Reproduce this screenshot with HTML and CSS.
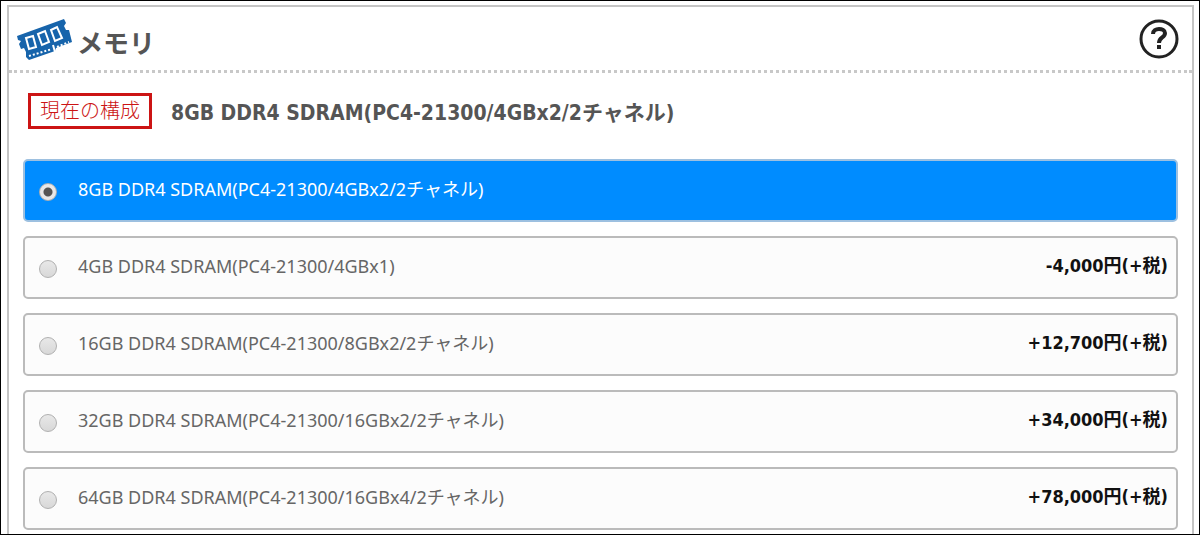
FILE: index.html
```html
<!DOCTYPE html>
<html lang="ja">
<head>
  <meta charset="UTF-8">
  <meta name="viewport" content="width=device-width, initial-scale=1.0">
  <title>メモリ</title>
  <link rel="stylesheet" href="styles.css">
</head>
<body>

  <main class="panel">
    <header class="panel-header">
      <svg class="memory-icon" viewBox="0 0 56 44" aria-hidden="true">
        <path fill="#1764ab" d="M0 19 L47 2 L49 6 L47 9 L49 13 L52 13 L55 25 L39 31 L38 34 L12 43 L9 40 L9 35 L7 31 L4 32 L2 27 L4 24 L1 23 Z"/>
        <g fill="none" stroke="#fff" stroke-width="2">
          <path d="M9 21 L16 19 L19 30 L12 32 Z"/>
          <path d="M21 17 L28 14 L32 25 L25 28 Z"/>
          <path d="M34 13 L40 10 L45 21 L38 24 Z"/>
        </g>
        <path stroke="#fff" stroke-width="2" stroke-dasharray="2 2" d="M12 39 L35 32 M40 30 L52 25"/>
        <path stroke="#fff" stroke-width="2" d="M36 28 L38 35"/>
      </svg>
      <h1>メモリ</h1>
      <button class="help-button" type="button" aria-label="ヘルプ">
        <svg viewBox="0 0 40 40" aria-hidden="true">
          <circle cx="20" cy="20" r="18" fill="none" stroke="#222" stroke-width="3"/>
          <path fill="none" stroke="#222" stroke-width="4" d="M14 15 C14 8 26 9 26 14 C26 19 20 18 20 24"/>
          <rect x="18" y="26" width="4" height="4" fill="#222"/>
        </svg>
      </button>
    </header>

    <!-- 現在の構成 -->
    <div class="current">
      <span class="current-label">現在の構成</span>
      <h2>8GB DDR4 SDRAM(PC4-21300/4GBx2/2チャネル)</h2>
    </div>

    <!-- 選択肢 -->
    <form class="options">
      <label class="option">
        <input type="radio" name="memory" checked>
        <span class="option-name">8GB DDR4 SDRAM(PC4-21300/4GBx2/2チャネル)</span>
      </label>
      <label class="option">
        <input type="radio" name="memory">
        <span class="option-name">4GB DDR4 SDRAM(PC4-21300/4GBx1)</span>
        <span class="option-price">-4,000円(+税)</span>
      </label>
      <label class="option">
        <input type="radio" name="memory">
        <span class="option-name">16GB DDR4 SDRAM(PC4-21300/8GBx2/2チャネル)</span>
        <span class="option-price">+12,700円(+税)</span>
      </label>
      <label class="option">
        <input type="radio" name="memory">
        <span class="option-name">32GB DDR4 SDRAM(PC4-21300/16GBx2/2チャネル)</span>
        <span class="option-price">+34,000円(+税)</span>
      </label>
      <label class="option">
        <input type="radio" name="memory">
        <span class="option-name">64GB DDR4 SDRAM(PC4-21300/16GBx4/2チャネル)</span>
        <span class="option-price">+78,000円(+税)</span>
      </label>
    </form>
  </main>

</body>
</html>
```
FILE: styles.css
```css
* {
  margin: 0;
  padding: 0;
  box-sizing: border-box;
}

body {
  display: flex;
  height: 100vh;
  overflow: hidden;
  padding: 4px 5px 0 6px;
  border: 1px solid #000;
  background-color: #fff;
  color: #555;
  font-family: "Noto Sans", "Noto Sans CJK JP", sans-serif;
  font-size: 18px;
  line-height: 26px;
}

.panel {
  flex: 1;
  border: 2px solid #c4c4c4;
  border-bottom: none;
}

/* ヘッダー */
.panel-header {
  display: flex;
  align-items: center;
  height: 66px;
  padding: 0 13px 0 8px;
  border-bottom: 3px dotted #c8c8c8;
}

.memory-icon {
  width: 56px;
  height: 44px;
}

.panel-header h1 {
  margin-left: 4px;
  padding-top: 8px;
  font-size: 26px;
  line-height: 32px;
}

.help-button {
  width: 40px;
  height: 40px;
  margin-left: auto;
  border: none;
  background: none;
  cursor: pointer;
}

/* 現在の構成 */
.current {
  display: flex;
  align-items: center;
  gap: 19px;
  padding: 20px 19px 30px;
}

.current-label {
  padding: 0 9px;
  border: 3px solid #cc1414;
  color: #cc1414;
  font-size: 20px;
  font-weight: 300;
  line-height: 30px;
}

.current h2 {
  padding-top: 4px;
  font-family: "DejaVu Sans Condensed", "Noto Sans CJK JP", sans-serif;
  font-size: 21px;
  line-height: 32px;
}

/* 選択肢 */
.options {
  display: grid;
  gap: 14px;
  padding: 0 14px;
}

.option {
  display: flex;
  align-items: center;
  height: 63px;
  padding: 0 8px 4px 14px;
  border: 2px solid #bbb;
  border-radius: 5px;
  background-color: #fcfcfc;
  color: #666;
  cursor: pointer;
}

.option:has(input:checked) {
  border-color: #9dc0e0;
  background-color: #008cff;
  color: #fff;
}

.option input {
  appearance: none;
  width: 18px;
  height: 18px;
  margin: 6px 21px 0 0;
  border: 1px solid #b0b0b0;
  border-radius: 50%;
  background: linear-gradient(#e8e8e8, #d8d8d8);
}

.option input:checked {
  background: radial-gradient(circle, #555 4px, #e8e8e8 5px);
}

.option-price {
  margin-left: auto;
  color: #111;
  font-family: "DejaVu Sans Condensed", "Noto Sans CJK JP", sans-serif;
  font-weight: bold;
}
```
